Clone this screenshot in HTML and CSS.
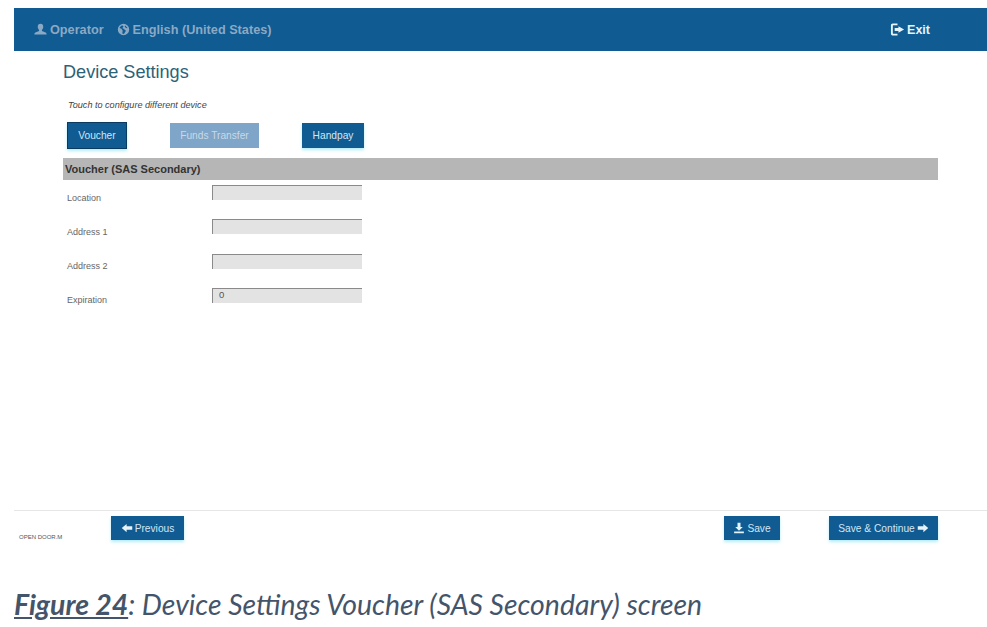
FILE: index.html
```html
<!DOCTYPE html>
<html lang="en">
<head>
<meta charset="utf-8">
<title>Device Settings</title>
<link rel="stylesheet" href="styles.css">
</head>
<body>
<div class="page">
  <header class="topbar">
    <div class="topbar-left">
      <span class="top-item">
        <svg class="top-icon" viewBox="0 0 16 16"><path d="M8 1c2.2 0 3.4 1.6 3.4 3.7 0 1.6-.7 3-1.6 3.8v1.4l4.4 1.7c.9.4 1.3 1 1.3 2.4H.5c0-1.4.4-2 1.3-2.4l4.4-1.700V8.500C5.300 7.700 4.600 6.300 4.600 4.700 4.600 2.600 5.800 1 8 1z"/></svg>
        Operator
      </span>
      <span class="top-item">
        <svg class="top-icon" viewBox="0 0 16 16"><path fill-rule="evenodd" d="M8 1a7 7 0 1 1 0 14A7 7 0 0 1 8 1zM5 3.500 3 6l2.500 1L7 9.500 6.500 13l2 .5 2.500-4-2.500-2L6.500 6 8 4.500 7 3zM10 3l-.5 2 2.500 1.500L13 6z"/></svg>
        English (United States)
      </span>
    </div>
    <a class="exit">
      <svg class="exit-icon" viewBox="0 0 16 16"><path d="M1 3.500C1 2.300 2 1.500 3 1.500h5v2H3.500C3.200 3.500 3 3.700 3 4v8c0 .3.200.5.500.5H8v2H3c-1 0-2-.8-2-2zM9 4.500l6 3.500-6 3.500V9.500H5v-3h4z"/></svg>
      Exit
    </a>
  </header>

  <main class="content">
    <h1 class="title">Device Settings</h1>
    <p class="hint">Touch to configure different device</p>
    <div class="tabs">
      <button class="btn tab tab-active">Voucher</button>
      <button class="btn tab tab-disabled">Funds Transfer</button>
      <button class="btn tab">Handpay</button>
    </div>
    <h2 class="section">Voucher (SAS Secondary)</h2>
    <div class="fields">
      <label class="field-label">Location</label><div class="input"></div>
      <label class="field-label">Address 1</label><div class="input"></div>
      <label class="field-label">Address 2</label><div class="input"></div>
      <label class="field-label">Expiration</label><div class="input">0</div>
    </div>
  </main>

  <footer class="footer">
    <span class="brand">OPEN DOOR.M</span>
    <button class="btn nav-prev">
      <svg class="btn-icon" viewBox="0 0 16 16"><path d="M7.500 2.500v3.300H15v4.400H7.500v3.300L1 8z"/></svg>
      Previous
    </button>
    <button class="btn nav-save">
      <svg class="btn-icon" viewBox="0 0 16 16"><path d="M6 1h4v5.500h3L8 11.500 3 6.500h3zM1.500 12.500h13V15h-13z"/></svg>
      Save
    </button>
    <button class="btn nav-continue">
      Save &amp; Continue
      <svg class="btn-icon" viewBox="0 0 16 16"><path d="M8.500 2.500v3.300H1v4.400h7.500v3.300L15 8z"/></svg>
    </button>
  </footer>

  <p class="caption"><span class="caption-ref">Figure 24</span>: Device Settings Voucher (SAS Secondary) screen</p>
</div>
</body>
</html>
```
FILE: styles.css
```css
* { box-sizing: border-box; }
html, body { margin: 0; padding: 0; background: #fff; }
body { font-family: "Liberation Sans", Arial, sans-serif; }
.page {
  width: 987px;
  height: 627px;
  padding-top: 8px;
  display: flex;
  flex-direction: column;
  overflow: hidden;
}
.topbar {
  margin-left: 14px;
  height: 43px;
  flex: none;
  background: #0f5b92;
  display: flex;
  align-items: center;
  justify-content: space-between;
  padding: 0 57px 0 20px;
}
.topbar-left { display: flex; gap: 13px; }
.top-item {
  display: flex;
  align-items: center;
  gap: 3px;
  color: #8ba9c4;
  font-size: 12.7px;
  font-weight: 700;
}
.top-icon { width: 13px; height: 13px; fill: #8ba9c4; }
.exit {
  display: flex;
  align-items: center;
  gap: 2px;
  color: #e6f4fa;
  font-size: 12.5px;
  font-weight: 700;
}
.exit-icon { width: 15px; height: 15px; fill: #e6f4fa; }
.content {
  flex: none;
  height: 459px;
  margin-left: 63px;
  width: 875px;
}
.title {
  margin: 10px 0 0;
  font-size: 18.1px;
  line-height: 22px;
  font-weight: 400;
  color: #2c6277;
}
.hint {
  margin: 16px 0 0 5px;
  font-size: 9.1px;
  line-height: 12px;
  font-style: italic;
  color: #444;
}
.tabs {
  margin: 12px 0 0 4px;
  display: flex;
  gap: 43px;
}
.btn {
  border: 0;
  padding: 0;
  background: #0f5b92;
  color: #d3e6f2;
  font-family: inherit;
  font-size: 10.2px;
  display: flex;
  align-items: center;
  justify-content: center;
  gap: 2px;
  box-shadow: 0 2px 3px #b5ecf7;
}
.tab { height: 25px; width: 62px; }
.tab-active {
  width: 60px;
  height: 27px;
  margin-top: -1px;
  border: 1px solid #0a3a5f;
}
.tab-disabled { width: 89px; background: #7fa5c8; color: #c9d9e6; box-shadow: none; }
.section {
  margin: 9px 0 0;
  height: 22px;
  padding-left: 2px;
  background: #b6b6b6;
  color: #333;
  font-size: 11px;
  line-height: 22px;
  font-weight: 700;
}
.fields {
  margin: 5px 0 0 4px;
  display: grid;
  grid-template-columns: 145px 150px;
  grid-auto-rows: 15px;
  row-gap: 19.3px;
}
.field-label {
  font-size: 9px;
  line-height: 11px;
  padding-top: 7.500px;
  color: #666;
  white-space: nowrap;
}
.input {
  background: #e3e3e3;
  border-top: 1px solid #8a8a8a;
  border-left: 1px solid #8a8a8a;
  padding-left: 6px;
  font-size: 9.5px;
  line-height: 11px;
  color: #555;
}
.footer {
  flex: none;
  height: 64px;
  margin-left: 14px;
  border-top: 1px solid #e6e6e6;
  padding-top: 5px;
  display: flex;
  align-items: flex-start;
  font-size: 10.2px;
}
.footer .btn { height: 24px; }
.brand {
  width: 97px;
  padding: 18px 0 0 5px;
  font-size: 6px;
  line-height: 7px;
  color: #555;
}
.nav-prev { width: 73px; }
.nav-save { width: 56px; margin-left: 540px; }
.nav-continue { width: 109px; margin-left: 49px; }
.btn-icon { width: 12px; height: 12px; fill: #e6f4fa; }
.caption {
  margin: 0;
  flex: none;
  padding: 14px 0 0 14px;
  font-family: Lato, "Open Sans", sans-serif;
  font-style: italic;
  font-size: 28.4px;
  line-height: 32px;
  color: #44546a;
  white-space: nowrap;
}
.caption-ref { font-weight: 700; text-decoration: underline; }
```
